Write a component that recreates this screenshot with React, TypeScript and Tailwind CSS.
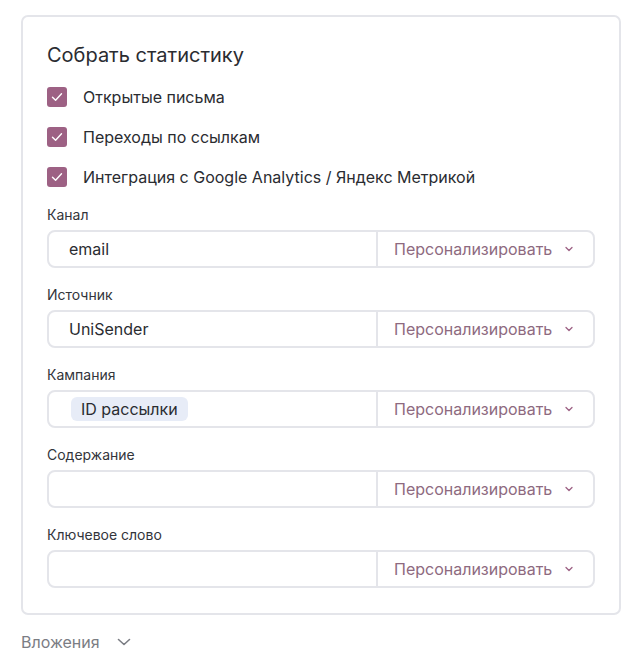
import React from "react";

const Check = () => (
  <div className="w-5 h-5 rounded-[3px] bg-[#9d6184] flex items-center justify-center shrink-0">
    <svg width="12" height="10" viewBox="0 0 12 10" fill="none">
      <path d="M1.5 5.2 L4.6 8.2 L10.5 1.8" stroke="white" strokeWidth="1.4" strokeLinecap="round" strokeLinejoin="round" />
    </svg>
  </div>
);

const Chevron = ({ className = "" }: { className?: string }) => (
  <svg className={className} width="10" height="6" viewBox="0 0 10 6" fill="none">
    <path d="M2 1.5 L5 4.5 L8 1.5" stroke="currentColor" strokeWidth="1.3" strokeLinecap="round" strokeLinejoin="round" />
  </svg>
);

const Field = ({ label, value, tag }: { label: string; value?: string; tag?: string }) => (
  <div className="flex flex-col">
    <div className="text-[14px] leading-5 text-[#33353b]">{label}</div>
    <div className="mt-[5px] h-[38px] border-2 border-[#e4e5ea] rounded-lg flex items-stretch">
      <div className="flex-1 flex items-center pl-[20px]">
        {value && <span className="text-[16px] text-[#2a2c31]">{value}</span>}
        {tag && (
          <span className="ml-[2px] h-6 px-[10px] rounded-md bg-[#e7ecf7] text-[16px] text-[#2a2c31] flex items-center">{tag}</span>
        )}
      </div>
      <div className="w-[217px] border-l-2 border-[#e4e5ea] flex items-center pl-[16px] text-[#8e6a80]">
        <span className="text-[16px]">Персонализировать</span>
        <Chevron className="ml-[12px] text-[#9d6184]" />
      </div>
    </div>
  </div>
);

export default function App() {
  return (
    <div className="bg-white min-h-[667px] pt-[15px] pl-[21px]" style={{ fontFamily: "Inter, 'Noto Sans', sans-serif" }}>
      <div className="w-[600px] border-2 border-[#e4e5ea] rounded-[7px] pt-[24px] pl-[24px] pr-[24px] pb-[25px]">
        <div className="text-[20px] leading-7 text-[#2a2c31]">Собрать статистику</div>
        <div className="mt-[18px] flex flex-col gap-[20px]">
          {["Открытые письма", "Переходы по ссылкам", "Интеграция с Google Analytics / Яндекс Метрикой"].map((t) => (
            <div key={t} className="flex items-center h-5">
              <Check />
              <span className="ml-[16px] text-[16px] text-[#2a2c31]">{t}</span>
            </div>
          ))}
        </div>
        <div className="mt-[18px] flex flex-col gap-[17px]">
          <Field label="Канал" value="email" />
          <Field label="Источник" value="UniSender" />
          <Field label="Кампания" tag="ID рассылки" />
          <Field label="Содержание" />
          <Field label="Ключевое слово" />
        </div>
      </div>
      <div className="mt-[15px] flex items-center h-6 text-[#7b7d84]">
        <span className="text-[16px]">Вложения</span>
        <svg className="ml-[17px]" width="14" height="8" viewBox="0 0 14 8" fill="none">
          <path d="M1.5 1.5 L7 6.5 L12.5 1.5" stroke="currentColor" strokeWidth="1.6" strokeLinecap="round" strokeLinejoin="round" />
        </svg>
      </div>
    </div>
  );
}
